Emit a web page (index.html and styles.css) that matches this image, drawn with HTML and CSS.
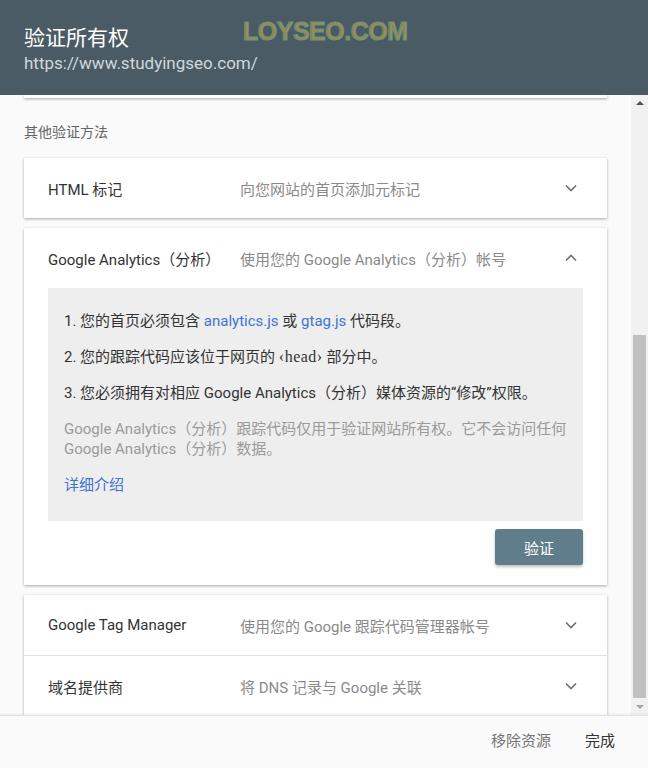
FILE: index.html
```html
<html>
<head>
  <meta charset="utf-8">
  <title>验证所有权</title>
  <link rel="stylesheet" href="styles.css">
</head>
<body>
  <div id="dialog">
    <header class="head">
      <div class="title">验证所有权</div>
      <div class="url">https://www.studyingseo.com/</div>
      <div class="mark">LOYSEO.COM</div>
    </header>

    <div class="middle">
      <div class="content">
        <div class="card-tail"></div>
        <div class="label">其他验证方法</div>

        <div class="card">
          <div class="row">
            <span class="name">HTML 标记</span>
            <span class="desc">向您网站的首页添加元标记</span>
            <svg class="chev" width="12" height="8" viewBox="0 0 12 8"><polyline points="1,1.5 6,6.5 11,1.5"/></svg>
          </div>
        </div>

        <div class="card open">
          <div class="row">
            <span class="name">Google Analytics（分析）</span>
            <span class="desc">使用您的 Google Analytics（分析）帐号</span>
            <svg class="chev" width="12" height="8" viewBox="0 0 12 8"><polyline points="1,6.5 6,1.5 11,6.5"/></svg>
          </div>
          <div class="info">
            <p>1. 您的首页必须包含 <a href="#">analytics.js</a> 或 <a href="#">gtag.js</a> 代码段。</p>
            <p>2. 您的跟踪代码应该位于网页的 <code>&lsaquo;head&rsaquo;</code> 部分中。</p>
            <p>3. 您必须拥有对相应 Google Analytics（分析）媒体资源的“修改”权限。</p>
            <p class="note">Google Analytics（分析）跟踪代码仅用于验证网站所有权。它不会访问任何 Google Analytics（分析）数据。</p>
            <p><a href="#">详细介绍</a></p>
          </div>
          <div class="actions">
            <button class="verify">验证</button>
          </div>
        </div>

        <div class="card">
          <div class="row">
            <span class="name">Google Tag Manager</span>
            <span class="desc">使用您的 Google 跟踪代码管理器帐号</span>
            <svg class="chev" width="12" height="8" viewBox="0 0 12 8"><polyline points="1,1.5 6,6.5 11,1.5"/></svg>
          </div>
          <div class="row divided">
            <span class="name">域名提供商</span>
            <span class="desc">将 DNS 记录与 Google 关联</span>
            <svg class="chev" width="12" height="8" viewBox="0 0 12 8"><polyline points="1,1.5 6,6.5 11,1.5"/></svg>
          </div>
        </div>
      </div>

      <div class="scrollbar">
        <div class="arrow up"></div>
        <div class="track"><div class="thumb"></div></div>
        <div class="arrow down"></div>
      </div>
    </div>

    <footer class="foot">
      <span class="btn muted">移除资源</span>
      <span class="btn">完成</span>
    </footer>
  </div>
</body>
</html>
```

FILE: styles.css
```css
body {
  margin: 0;
  font-family: Roboto, "Noto Sans CJK SC", sans-serif;
  color: #333;
  background-color: #fafafa;
}

#dialog {
  width: 648px;
  height: 768px;
  display: flex;
  flex-direction: column;
  overflow: hidden;
}

.head {
  position: relative;
  height: 95px;
  flex: none;
  box-sizing: border-box;
  padding: 24px 24px 0 24px;
  background-color: #4a5b66;
  z-index: 2;
}

.head .title {
  font-size: 21px;
  line-height: 28px;
  color: #fff;
}

.head .url {
  font-size: 17px;
  line-height: 22px;
  color: #cfd8dc;
}

/* watermark over the header */
.head .mark {
  position: absolute;
  left: 243px;
  top: 17px;
  font-family: "Liberation Sans", sans-serif;
  font-weight: bold;
  font-size: 25px;
  letter-spacing: -0.5px;
  color: #a5845a;
  -webkit-text-stroke: 1px #5e9b74;
}

.middle {
  flex: 1;
  display: flex;
  overflow: hidden;
}

.content {
  flex: 1;
  padding: 0 24px;
}

.card-tail {
  height: 3px;
  background-color: #fff;
  box-shadow: 0 1px 3px rgba(0, 0, 0, 0.35);
}

.label {
  margin: 24px 0 16px 0;
  font-size: 14px;
  line-height: 20px;
  color: #666;
}

.card {
  background-color: #fff;
  box-shadow: 0 1px 3px rgba(0, 0, 0, 0.22), 0 1px 2px rgba(0, 0, 0, 0.12);
  margin-bottom: 10px;
}

.row {
  height: 60px;
  display: flex;
  align-items: center;
  padding: 0 30px 0 24px;
  font-size: 15px;
}

.row.divided {
  border-top: 1px solid #e0e0e0;
}

.row .name {
  width: 192px;
  flex: none;
  color: #333;
}

.row .desc {
  flex: 1;
  color: #8a8a8a;
}

.chev {
  flex: none;
}

.chev polyline {
  fill: none;
  stroke: #6f6f6f;
  stroke-width: 1.6;
}

.info {
  margin: 0 24px;
  padding: 23px 16px 26px 16px;
  background-color: #eeeeee;
  font-size: 15px;
  line-height: 20px;
}

.info p {
  margin: 0 0 16px 0;
}

.info p:last-child {
  margin-bottom: 0;
}

.info .note {
  color: #9a9a9a;
}

.info code {
  font-family: "Liberation Serif", serif;
  font-size: 16px;
  letter-spacing: 0.5px;
}

a {
  text-decoration: none;
  color: #3f74d4;
}

.actions {
  display: flex;
  justify-content: flex-end;
  padding: 8px 24px 20px 24px;
}

.verify {
  width: 88px;
  height: 36px;
  border: none;
  border-radius: 3px;
  background-color: #607d8b;
  color: #fff;
  font-family: Roboto, "Noto Sans CJK SC", sans-serif;
  font-size: 15px;
  box-shadow: 0 2px 3px rgba(0, 0, 0, 0.25);
}

.scrollbar {
  width: 17px;
  flex: none;
  display: flex;
  flex-direction: column;
  background-color: #f1f1f1;
}

.scrollbar .arrow {
  height: 17px;
  flex: none;
  position: relative;
}

.scrollbar .arrow::after {
  content: "";
  position: absolute;
  left: 5px;
  border-left: 4px solid transparent;
  border-right: 4px solid transparent;
}

.scrollbar .up::after {
  top: 6px;
  border-bottom: 4px solid #505050;
}

.scrollbar .down::after {
  top: 7px;
  border-top: 4px solid #a3a3a3;
}

.scrollbar .track {
  flex: 1;
  padding: 223px 2px 0 2px;
}

.scrollbar .thumb {
  height: 363px;
  background-color: #c1c1c1;
}

.foot {
  height: 53px;
  flex: none;
  display: flex;
  justify-content: flex-end;
  align-items: center;
  gap: 34px;
  padding: 0 33px 5px 0;
  box-sizing: border-box;
  background-color: #fafafa;
  border-top: 1px solid #e2e2e2;
  box-shadow: 0 -1px 2px rgba(0, 0, 0, 0.06);
  position: relative;
  z-index: 1;
  font-size: 15px;
}

.foot .btn {
  color: #333;
}

.foot .btn.muted {
  color: #757575;
}
```
